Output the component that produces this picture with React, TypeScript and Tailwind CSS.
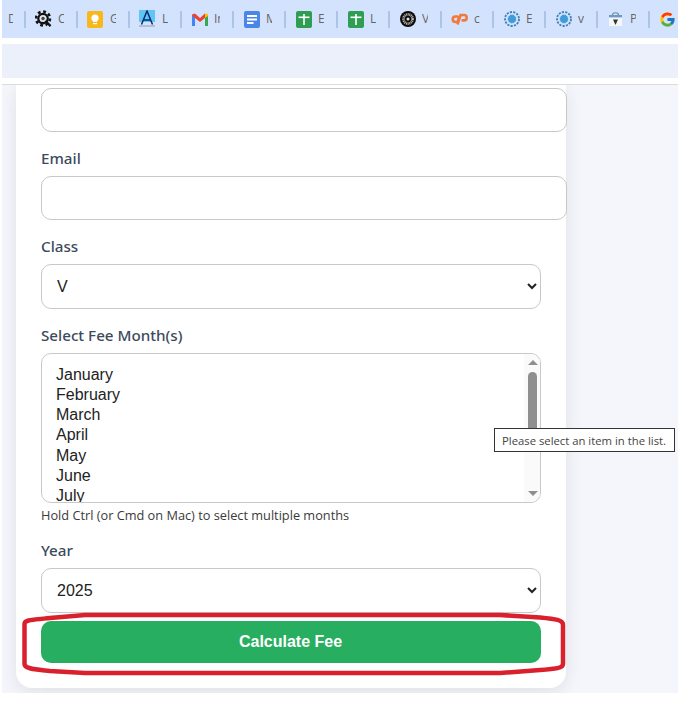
import React from 'react';
import { FcGoogle } from 'react-icons/fc';

const MONTHS = ['January', 'February', 'March', 'April', 'May', 'June', 'July'];

function GearIcon() {
  return (
    <svg width="18" height="18" viewBox="0 0 18 18">
      <circle cx="8.5" cy="8.5" r="7.4" fill="none" stroke="#111" strokeWidth="2.6" strokeDasharray="3 2.8" />
      <circle cx="8.5" cy="8.5" r="6.2" fill="#111" />
      <circle cx="8.5" cy="8.5" r="3.8" fill="#dfe6f2" />
      <circle cx="8.5" cy="8.5" r="1.8" fill="#444" />
      <path d="M11 11 L16.5 16.5" stroke="#111" strokeWidth="2.4" />
    </svg>
  );
}

function KeepIcon() {
  return (
    <svg width="17" height="17" viewBox="0 0 17 17">
      <rect width="16" height="17" rx="2" fill="#f8b81c" />
      <circle cx="8" cy="7" r="3.6" fill="#fff" />
      <rect x="6" y="9" width="4" height="2" fill="#fff" />
      <rect x="6" y="12" width="4" height="1.2" fill="#fff" />
    </svg>
  );
}

function ALogoIcon() {
  return (
    <svg width="17" height="18" viewBox="0 0 17 18">
      <rect x="0" y="0" width="16" height="12" fill="#5ec6f5" />
      <path d="M2.5 14.5 L8 1 L13.5 14.5 M5 10 H11" fill="none" stroke="#0d2a6e" strokeWidth="1.5" />
      <path d="M0 16 H16" stroke="#a9b4c4" strokeWidth="1.5" />
    </svg>
  );
}

function GmailIcon() {
  return (
    <svg width="16" height="13" viewBox="0 0 16 13">
      <path d="M0 2 L0 13 H3 V4 Z" fill="#4285f4" />
      <path d="M16 2 L16 13 H13 V4 Z" fill="#34a853" />
      <path d="M0 1.5 L3 0.5 L8 5 L13 0.5 L13 5 L8 9 L3 5 L0 2.5 Z" fill="#ea4335" />
      <path d="M13 0.5 L16 1 V3 L13 5 Z" fill="#fbbc04" />
    </svg>
  );
}

function DocsIcon() {
  return (
    <svg width="16" height="17" viewBox="0 0 16 17">
      <rect width="16" height="17" rx="2" fill="#4a86e8" />
      <rect x="3" y="4" width="10" height="2" fill="#fff" />
      <rect x="3" y="7.5" width="10" height="2" fill="#fff" />
      <rect x="3" y="11" width="6.5" height="2" fill="#fff" />
    </svg>
  );
}

function SheetsIcon() {
  return (
    <svg width="16" height="17" viewBox="0 0 16 17">
      <rect width="16" height="17" rx="2" fill="#2f9e52" />
      <rect x="2.5" y="5.5" width="11" height="1.6" fill="#fff" />
      <rect x="7.2" y="3" width="1.6" height="11" fill="#fff" />
    </svg>
  );
}

function WheelIcon() {
  return (
    <svg width="16" height="16" viewBox="0 0 16 16">
      <circle cx="8" cy="8" r="8" fill="#0b0b0b" />
      <circle cx="8" cy="8" r="4.6" fill="none" stroke="#bdb8ac" strokeWidth="2.6" strokeDasharray="1 0.6" />
      <circle cx="8" cy="8" r="1.5" fill="#e6e6e6" />
    </svg>
  );
}

function CpIcon() {
  return (
    <svg width="17" height="12" viewBox="0 0 17 12">
      <path d="M7 3.5 H4.5 A2.6 2.6 0 0 0 4.5 9 H6.5 L8.5 3" fill="none" stroke="#ef7a3c" strokeWidth="2.6" />
      <path d="M6.5 11.5 L9.6 2 H13 A2.6 2.6 0 0 1 13 7.4 H10.5" fill="none" stroke="#ef7a3c" strokeWidth="2.6" />
    </svg>
  );
}

function DotsIcon() {
  return (
    <svg width="16" height="16" viewBox="0 0 16 16">
      <circle cx="8" cy="8" r="7" fill="none" stroke="#3f7fb5" strokeWidth="1.8" strokeDasharray="2.2 1.2" />
      <circle cx="8" cy="8" r="4.4" fill="#3f9bd9" />
      <circle cx="8" cy="8" r="4.4" fill="none" stroke="#cfe4f5" strokeWidth="0.9" strokeDasharray="1.4 1.4" />
    </svg>
  );
}

function PassIcon() {
  return (
    <svg width="15" height="16" viewBox="0 0 15 16">
      <path d="M4.5 4 C4.5 1 10.5 1 10.5 4" fill="none" stroke="#6f8aa3" strokeWidth="1.2" />
      <rect x="1" y="4" width="13" height="2.6" fill="#6b9bc9" />
      <rect x="1" y="6.6" width="13" height="8.4" fill="#f4f6f8" />
      <path d="M5 8.5 H10 L7.5 14 Z" fill="#333" />
    </svg>
  );
}

const BOOKMARKS: { icon: React.ReactNode; label: string }[] = [
  { icon: <GearIcon />, label: 'C' },
  { icon: <KeepIcon />, label: 'G' },
  { icon: <ALogoIcon />, label: 'L' },
  { icon: <GmailIcon />, label: 'In' },
  { icon: <DocsIcon />, label: 'M' },
  { icon: <SheetsIcon />, label: 'E' },
  { icon: <SheetsIcon />, label: 'L' },
  { icon: <WheelIcon />, label: 'V' },
  { icon: <CpIcon />, label: 'c' },
  { icon: <DotsIcon />, label: 'E' },
  { icon: <DotsIcon />, label: 'vi' },
  { icon: <PassIcon />, label: 'P' },
  { icon: <FcGoogle size={17} />, label: '' },
];

function FieldLabel({ children, className }: { children: React.ReactNode; className: string }) {
  return (
    <label className={`block h-[20px] text-[15.2px] leading-[20px] font-medium text-[#3c4a5c] font-['Noto_Sans',sans-serif] ${className}`}>
      {children}
    </label>
  );
}

function App() {
  return (
    <div className="relative w-[678px] h-[716px] overflow-hidden bg-white pl-[2px] font-['Open_Sans',sans-serif]">
      {/* Browser bookmarks bar */}
      <div className="flex items-center h-[38px] bg-[#d3e3fd] text-[#666]">
        <span className="shrink-0 w-[22px] pl-[6px] text-[12px] leading-none">
          <span className="block w-[5px] overflow-hidden">D</span>
        </span>
        {BOOKMARKS.map((b, i) => (
          <div key={i} className="flex items-center shrink-0 w-[52px]">
            <span className="w-[2px] h-[17px] bg-[#adc4e4]" />
            <span className="flex items-center justify-center w-[17px] h-[18px] ml-[9px]">{b.icon}</span>
            <span className="ml-[6px] w-[6px] overflow-hidden text-[12px] leading-none whitespace-nowrap">{b.label}</span>
          </div>
        ))}
      </div>
      <div className="mt-[6px] h-[34px] bg-[#ebf0fa]" />
      <div className="h-[7px] border-b border-[#dcdcdc]" />

      {/* Page */}
      <main className="h-[608px] overflow-hidden bg-[#f4f6fb] pl-[14px]">
        <div className="w-[550px] h-[603px] rounded-b-[16px] bg-white px-[25px] pt-[3px] shadow-[0_4px_18px_rgba(0,0,0,0.09)]">
          <input className="block w-[526px] h-[44px] rounded-[10px] border border-[#c8c8c8] bg-white" />

          <FieldLabel className="mt-[16px] mb-[8px]">Email</FieldLabel>
          <input className="block w-[526px] h-[44px] rounded-[10px] border border-[#c8c8c8] bg-white" />

          <FieldLabel className="mt-[16px] mb-[8px]">Class</FieldLabel>
          <select
            defaultValue="V"
            className="block w-full h-[45px] rounded-[10px] border border-[#c8c8c8] bg-white px-[11px] text-[16px] text-[#222] font-['Liberation_Sans',sans-serif]"
          >
            <option>IV</option>
            <option>V</option>
          </select>

          <FieldLabel className="mt-[16px] mb-[8px]">Select Fee Month(s)</FieldLabel>
          <div className="relative h-[150px] overflow-hidden rounded-[10px] border border-[#c8c8c8] bg-white pl-[14px] pt-[11px] font-['Liberation_Sans',sans-serif] text-[16px] leading-[20.15px] text-[#222]">
            {MONTHS.map((m) => (
              <div key={m}>{m}</div>
            ))}
            <div className="absolute right-0 top-0 bottom-0 w-[16px] bg-[#fafafa]">
              <div className="absolute left-[4px] top-[6px] w-0 h-0 border-x-[5px] border-x-transparent border-b-[5px] border-b-[#8f8f8f]" />
              <div className="absolute left-[4px] top-[18px] w-[9px] h-[70px] rounded-full bg-[#8f8f8f]" />
              <div className="absolute left-[4px] bottom-[6px] w-0 h-0 border-x-[5px] border-x-transparent border-t-[5px] border-t-[#8f8f8f]" />
            </div>
          </div>
          <p className="mt-[3px] h-[18px] text-[12.75px] leading-[18px] text-[#3a3a3a]">
            Hold Ctrl (or Cmd on Mac) to select multiple months
          </p>

          <FieldLabel className="mt-[16px] mb-[8px]">Year</FieldLabel>
          <select
            defaultValue="2025"
            className="block w-full h-[45px] rounded-[10px] border border-[#c8c8c8] bg-white px-[11px] text-[16px] text-[#222] font-['Liberation_Sans',sans-serif]"
          >
            <option>2024</option>
            <option>2025</option>
          </select>

          <button className="block w-full h-[42px] mt-[8px] rounded-[10px] bg-[#27ae60] pr-[1px] text-[16px] font-bold text-white font-['Liberation_Sans',sans-serif]">
            Calculate Fee
          </button>
        </div>
      </main>

      {/* Validation bubble */}
      <div className="absolute left-[494px] top-[428px] w-[181px] h-[24px] border border-[#333] bg-white pl-[7px] text-[11.3px] leading-[23px] text-[#444] whitespace-nowrap">
        Please select an item in the list.
      </div>

      {/* Red annotation drawn around the button */}
      <svg className="absolute left-0 top-0 pointer-events-none" width="678" height="716">
        <path
          d="M24.5 624 C24.5 620 30 620 50 618 L85 615 H500 L540 617.5 C556 619 563 620 563 625 V664 C563 668 556 669 540 670 L500 673 H85 L50 671 C30 669 24.5 668 24.5 664 Z"
          fill="none"
          stroke="#d9202c"
          strokeWidth="4.5"
        />
      </svg>
    </div>
  );
}

export default App;
